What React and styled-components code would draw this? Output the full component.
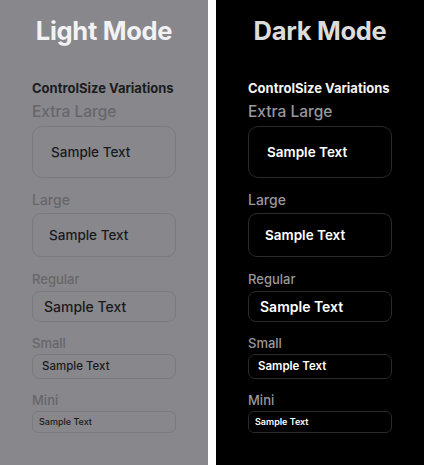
import React from 'react';
import styled, { createGlobalStyle } from 'styled-components';

const GlobalStyle = createGlobalStyle`
  html, body {
    margin: 0;
    padding: 0;
    background: #ffffff;
  }
  body {
    font-family: Inter, "Noto Sans", sans-serif;
    -webkit-font-smoothing: antialiased;
  }
`;

const Page = styled.div`
  display: grid;
  grid-template-columns: 208px 208px;
  column-gap: 8px;
  width: 424px;
  height: 465px;
`;

const Panel = styled.div`
  display: flex;
  flex-direction: column;
  padding: 0 32px;
  background-color: ${props => props.dark ? '#000000' : '#88878c'};
`;

const Title = styled.h1`
  margin: 16px 0 0;
  font-size: 25.5px;
  line-height: 30px;
  font-weight: 700;
  letter-spacing: -0.3px;
  text-align: center;
  color: ${props => props.dark ? '#dcdcdc' : '#f2f2f4'};
`;

const Heading = styled.h2`
  margin: 34px 0 0;
  font-size: 13px;
  line-height: 16px;
  font-weight: 700;
  color: ${props => props.dark ? '#f4f4f4' : '#1c1c1e'};
`;

const Label = styled.div`
  margin-top: ${props => props.top}px;
  font-size: ${props => props.size}px;
  line-height: ${props => props.size + 3}px;
  font-weight: 500;
  color: ${props => props.dark ? '#98989c' : '#67666b'};
`;

const Field = styled.div`
  display: flex;
  align-items: center;
  box-sizing: border-box;
  margin-top: ${props => props.gap}px;
  height: ${props => props.height}px;
  padding-left: ${props => props.pad}px;
  border-radius: ${props => props.radius}px;
  border: 1px solid ${props => props.dark ? '#2a2a2c' : '#7b7a7f'};
  font-size: ${props => props.size}px;
  font-weight: ${props => props.dark ? 600 : 500};
  color: ${props => props.dark ? '#ffffff' : '#1a1a1c'};
`;

const sizes = [
  { name: 'Extra Large', labelSize: 15.5, top: 7, gap: 4, height: 52, pad: 18, radius: 10, size: 13.5 },
  { name: 'Large', labelSize: 14, top: 13, gap: 5, height: 44, pad: 16, radius: 9, size: 13.5 },
  { name: 'Regular', labelSize: 13, top: 14, gap: 4, height: 31, pad: 11, radius: 8, size: 14 },
  { name: 'Small', labelSize: 13, top: 13, gap: 3, height: 25, pad: 9, radius: 7, size: 11.5 },
  { name: 'Mini', labelSize: 13, top: 13, gap: 3, height: 22, pad: 6, radius: 6, size: 9 },
];

const ModePanel = ({ dark }) => (
  <Panel dark={dark}>
    <Title dark={dark}>{dark ? 'Dark Mode' : 'Light Mode'}</Title>
    <Heading dark={dark}>ControlSize Variations</Heading>
    {sizes.map(s => (
      <React.Fragment key={s.name}>
        <Label dark={dark} size={s.labelSize} top={s.top}>{s.name}</Label>
        <Field
          dark={dark}
          gap={s.gap}
          height={s.height}
          pad={s.pad}
          radius={s.radius}
          size={s.size}
        >
          Sample Text
        </Field>
      </React.Fragment>
    ))}
  </Panel>
);

export default function App() {
  return (
    <>
      <GlobalStyle />
      <Page>
        <ModePanel />
        <ModePanel dark />
      </Page>
    </>
  );
}
